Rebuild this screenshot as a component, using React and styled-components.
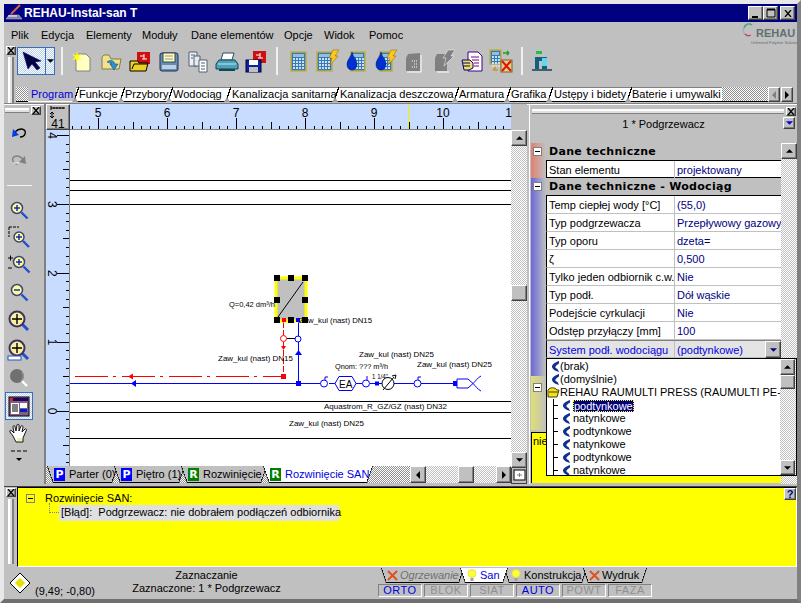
import React from 'react'
import styled, { createGlobalStyle, css } from 'styled-components'

const GlobalStyle = createGlobalStyle`
  html, body { margin: 0; padding: 0; background: #c0c0c0; }
  * { box-sizing: border-box; }
  svg { display: block; flex: none; }
`

const raised = css`
  background-color: #c0c0c0;
  border: 1px solid;
  border-color: #fff #404040 #404040 #fff;
  box-shadow: inset -1px -1px 0 #808080;
`
const sunken = css`
  border: 1px solid;
  border-color: #808080 #fff #fff #808080;
`
const dither = css`
  background-color: #fff;
  background-image: repeating-conic-gradient(#c0c0c0 0 25%, #fff 0 50%);
  background-size: 2px 2px;
`
const slashLine = (dir) =>
  `linear-gradient(${dir}, transparent calc(50% - 0.7px), #000 calc(50% - 0.7px), #000 calc(50% + 0.7px), transparent calc(50% + 0.7px))`

const Window = styled.div`
  width: 801px;
  height: 603px;
  background: #c0c0c0;
  border-style: solid;
  border-width: 4px;
  border-color: #e8e8e8 #808080 #707070 #e8e8e8;
  display: flex;
  flex-direction: column;
  font-family: 'Liberation Sans', Arial, sans-serif;
  font-size: 11px;
  color: #000;
  overflow: hidden;
`

const TitleBar = styled.div`
  height: 18px;
  flex: none;
  background: #000080;
  display: flex;
  align-items: center;
  padding: 0 2px 0 1px;
  color: #fff;
`
const TitleText = styled.div`
  font-weight: bold;
  font-size: 12px;
  margin-left: 1px;
  flex: 1;
`
const CaptionButton = styled.div`
  ${raised}
  width: 15px;
  height: 14px;
  margin-left: ${(p) => p.$gap || 0}px;
  display: flex;
  align-items: center;
  justify-content: center;
`

const MenuRow = styled.div`
  height: 24px;
  flex: none;
  display: flex;
  align-items: center;
  padding: 1px 0 0 7px;
  position: relative;
`
const MenuItem = styled.span`
  width: ${(p) => p.$w}px;
`
const Logo = styled.div`
  position: absolute;
  right: 3px;
  top: 1px;
  width: 52px;
  height: 24px;
`
const LogoWord = styled.div`
  position: absolute;
  left: 14px;
  top: 4px;
  font-size: 11px;
  font-weight: bold;
  color: #5e7070;
`
const LogoSmall = styled.div`
  position: absolute;
  left: 9px;
  top: 17px;
  font-size: 4px;
  white-space: nowrap;
  color: #5e7070;
`

const ToolRow = styled.div`
  height: 41px;
  flex: none;
  display: flex;
  align-items: flex-start;
`
const DockGrip = styled.div`
  width: 12px;
  padding-left: 1px;
  flex: none;
  display: flex;
  flex-direction: column;
  align-items: center;
  gap: 2px;
  align-self: stretch;
`
const CloseBox = styled.div`
  ${raised}
  width: 10px;
  height: 9px;
  display: flex;
  align-items: center;
  justify-content: center;
  flex: none;
`
const GripBars = styled.div`
  flex: 1;
  width: 6px;
  border-left: 2px solid #fff;
  border-right: 2px solid #808080;
  background: #e0e0e0;
`
const PointerButton = styled.div`
  ${dither}
  background-image: repeating-conic-gradient(#b8d0f0 0 25%, #fff 0 50%);
  border: 1px solid #3a6cc0;
  width: 38px;
  height: 28px;
  margin: 1px 0 0 1px;
  display: flex;
  flex: none;
`
const PointerFace = styled.div`
  width: 28px;
  display: flex;
  align-items: center;
  justify-content: center;
  border-right: 1px solid #3a6cc0;
`
const PointerDrop = styled.div`
  flex: 1;
  display: flex;
  align-items: center;
  justify-content: center;
`
const ToolSep = styled.div`
  width: 2px;
  height: 28px;
  margin: 1px ${(p) => p.$r}px 0 ${(p) => p.$l}px;
  background: #f0f0f0;
  flex: none;
`
const IconSlot = styled.div`
  width: 29px;
  height: 29px;
  display: flex;
  align-items: center;
  justify-content: center;
  flex: none;
`

const TabRow = styled.div`
  height: 16px;
  flex: none;
  display: flex;
`
const TabDither = styled.div`
  ${dither}
  flex: ${(p) => (p.$grow ? 1 : 'none')};
  width: ${(p) => p.$w || 0}px;
  background-image: repeating-conic-gradient(#909090 0 25%, #fff 0 50%);
  height: 15px;
  border-bottom: 1px solid #000;
`
const TopTab = styled.div`
  height: 15px;
  width: ${(p) => p.$w}px;
  flex: none;
  padding: 1px 0 0 ${(p) => p.$pad}px;
  line-height: 13px;
  white-space: nowrap;
  overflow: visible;
  background: ${(p) => (p.$active ? '#c0c0c0' : '#fff')};
  color: ${(p) => (p.$active ? '#0000e0' : '#000')};
  border-bottom: 1px solid ${(p) => (p.$active ? '#fff' : '#000')};
  box-shadow: ${(p) => (p.$active ? 'none' : 'inset 0 1px 0 #808080')};
  position: relative;
  &::before {
    content: '';
    position: absolute;
    left: -2px;
    top: 0;
    width: 5px;
    height: 14px;
    background: ${slashLine('to top left')};
    display: ${(p) => (p.$first ? 'none' : 'block')};
  }
  &::after {
    content: '';
    position: absolute;
    left: -4px;
    bottom: -1px;
    border-left: 3px solid transparent;
    border-right: 3px solid transparent;
    border-bottom: 5px solid #a0a0a0;
    display: ${(p) => (p.$first ? 'none' : 'block')};
  }
`
const TabArrows = styled.div`
  width: 25px;
  height: 15px;
  margin-right: 2px;
  flex: none;
  display: flex;
  gap: 1px;
`
const ArrowBox = styled.div`
  ${raised}
  flex: ${(p) => (p.$fixed ? 'none' : 1)};
  width: ${(p) => (p.$fixed ? p.$fixed + 'px' : 'auto')};
  height: ${(p) => (p.$h ? p.$h + 'px' : 'auto')};
  display: flex;
  align-items: center;
  justify-content: center;
`

const Main = styled.div`
  height: 381px;
  flex: none;
  display: flex;
  border-top: 1px solid #808080;
  box-shadow: inset 0 1px 0 #fff;
`
const LeftTools = styled.div`
  width: 42px;
  flex: none;
  display: flex;
  flex-direction: column;
  align-items: flex-start;
  border-right: 2px solid #808080;
  padding: 1px 0 0 1px;
`
const LeftHead = styled.div`
  display: flex;
  width: 36px;
  height: 11px;
  align-items: center;
  gap: 2px;
`
const HBars = styled.div`
  flex: 1;
  height: 5px;
  border-top: 2px solid #fff;
  border-bottom: 1px solid #808080;
  background: #e0e0e0;
`
const LeftIcon = styled.div`
  width: 28px;
  height: ${(p) => p.$h || 28}px;
  margin-top: ${(p) => p.$mt || 0}px;
  display: flex;
  align-items: center;
  justify-content: center;
  flex: none;
  ${(p) =>
    p.$selected &&
    css`
      border: 1px solid #3a6cc0;
      background-color: #fff;
      background-image: repeating-conic-gradient(#b8d0f0 0 25%, #fff 0 50%);
      background-size: 2px 2px;
    `}
`
const LeftSep = styled.div`
  width: 25px;
  height: 1px;
  background: #f4f4f4;
  margin: 11px 0 13px 2px;
  flex: none;
`

const Drawing = styled.div`
  width: 481px;
  flex: none;
  display: flex;
  flex-direction: column;
`
const RulerRow = styled.div`
  height: 26px;
  display: flex;
  flex: none;
`
const RulerCorner = styled.div`
  ${raised}
  width: 24px;
  height: 26px;
  display: flex;
  flex-direction: column;
  align-items: center;
  justify-content: space-between;
  line-height: 12px;
  padding: 1px 0;
  font-size: 12px;
  flex: none;
`
const CanvasRow = styled.div`
  height: 336px;
  display: flex;
  flex: none;
`
const Canvas = styled.div`
  width: 441px;
  background: #fff;
  flex: none;
  display: flex;
`
const VScroll = styled.div`
  ${dither}
  width: 16px;
  flex: none;
  display: flex;
  flex-direction: column;
  height: ${(p) => p.$h || 'auto'};
  position: relative;
`
const ScrollSpacer = styled.div`
  flex: ${(p) => p.$flex || 1};
  height: ${(p) => (p.$h ? p.$h + 'px' : 'auto')};
  width: ${(p) => (p.$w ? p.$w + 'px' : 'auto')};
`
const BottomRow = styled.div`
  height: 18px;
  display: flex;
  flex: none;
`
const SheetTabs = styled.div`
  ${dither}
  background-image: repeating-conic-gradient(#909090 0 25%, #fff 0 50%);
  width: 364px;
  flex: none;
  display: flex;
  padding-left: 1px;
  height: 17px;
`
const SheetTab = styled.div`
  width: ${(p) => p.$w}px;
  margin-right: -4px;
  flex: none;
  height: 17px;
  display: flex;
  align-items: center;
  gap: 4px;
  padding: 0 0 1px 7px;
  white-space: nowrap;
  color: ${(p) => (p.$active ? '#0000e0' : '#000')};
  clip-path: polygon(0 0, 100% 0, calc(100% - 6px) 100%, 6px 100%);
  background:
    ${slashLine('to top right')} left / 6px 100% no-repeat,
    ${slashLine('to top left')} right / 6px 100% no-repeat,
    linear-gradient(#000, #000) bottom / 100% 1px no-repeat,
    ${(p) => (p.$active ? '#fff' : '#c0c0c0')};
  position: relative;
  z-index: ${(p) => (p.$active ? 2 : 1)};
`
const Badge = styled.span`
  width: 11px;
  height: 13px;
  background: ${(p) => (p.$green ? '#008000' : '#0000ff')};
  color: #fff;
  font-weight: bold;
  font-size: 11px;
  line-height: 13px;
  text-align: center;
  font-family: 'DejaVu Sans', sans-serif;
  flex: none;
`
const HScroll = styled.div`
  ${dither}
  width: 101px;
  flex: none;
  height: 17px;
  display: flex;
`
const SizeBox = styled.div`
  width: 16px;
  height: 18px;
  margin-top: 0;
  border: 1px solid #404040;
  background: #c0c0c0;
  display: flex;
  align-items: center;
  justify-content: center;
  flex: none;
`

const Side = styled.div`
  width: 267px;
  flex: none;
  margin-left: 2px;
  padding-left: 1px;
  display: flex;
  flex-direction: column;
  border-left: 1px solid #fff;
  position: relative;
`
const SideHead = styled.div`
  height: 12px;
  flex: none;
  display: flex;
  align-items: center;
  padding: 2px 0 0 1px;
  gap: 2px;
`
const SideTitle = styled.div`
  height: 27px;
  flex: none;
  position: relative;
  text-align: center;
  padding-top: 1px;
  line-height: 15px;
`
const SideMenuButton = styled.div`
  ${raised}
  position: absolute;
  right: 1px;
  top: 1px;
  width: 12px;
  height: 12px;
  display: flex;
  align-items: center;
  justify-content: center;
`
const SideBody = styled.div`
  flex: 1;
  display: flex;
  position: relative;
`
const Props = styled.div`
  width: 250px;
  flex: none;
  display: flex;
  flex-direction: column;
`
const PropGroup = styled.div`
  display: flex;
  flex: none;
  background: ${(p) => `linear-gradient(to right, ${p.$tint}, #c0c0c0 15px)`};
`
const Gutter = styled.div`
  width: 15px;
  flex: none;
  padding: ${(p) => p.$top || 4}px 0 0 2px;
  height: ${(p) => (p.$h ? p.$h + 'px' : 'auto')};
`
const Minus = styled.div`
  width: 9px;
  height: 9px;
  background: #fff;
  border: 1px solid #808080;
  display: flex;
  align-items: center;
  justify-content: center;
  &::after {
    content: '';
    width: 5px;
    height: 1px;
    background: #000;
  }
`
const GroupRows = styled.div`
  flex: 1;
`
const GroupHead = styled.div`
  height: 18px;
  background: #c0c0c0;
  border-bottom: 1px solid #000;
  font-family: 'DejaVu Sans', sans-serif;
  font-weight: bold;
  font-size: 11px;
  letter-spacing: 0.3px;
  line-height: 18px;
  padding-left: 3px;
  white-space: nowrap;
`
const Row = styled.div`
  height: ${(p) => p.$h || 18}px;
  display: grid;
  grid-template-columns: 128px 106px;
  background: ${(p) => (p.$current ? '#e4e4e4' : '#fff')};
  border-left: 1px solid #000;
  border-bottom: 1px solid ${(p) => (p.$last ? '#000' : '#c0c0c0')};
  border-top: ${(p) => (p.$current ? '1px solid #808080' : '0')};
  line-height: 18px;
  color: ${(p) => (p.$current ? '#0000e0' : '#000')};
  position: relative;
`
const Label = styled.div`
  padding-left: 2px;
  border-right: 1px solid #c0c0c0;
  white-space: nowrap;
`
const Value = styled.div`
  padding-left: 2px;
  color: ${(p) => (p.$link ? '#0000e0' : '#000080')};
  white-space: nowrap;
`
const ComboButton = styled.div`
  ${raised}
  position: absolute;
  right: 0;
  top: 0;
  width: 16px;
  height: 17px;
  display: flex;
  align-items: center;
  justify-content: center;
`
const NoteBox = styled.div`
  flex: 1;
  margin: 2px 0 1px;
  background: #ff0;
  border-top: 1px solid #000;
  border-left: 1px solid #000;
  padding-left: 1px;
  line-height: 17px;
  overflow: hidden;
`
const DropList = styled.div`
  position: absolute;
  left: 15px;
  top: 215px;
  width: 251px;
  height: 118px;
  background: #fff;
  border: 1px solid #000;
  display: flex;
  z-index: 5;
`
const DropItems = styled.div`
  flex: 1;
  padding: 1px 0 0 0;
  overflow: hidden;
  position: relative;
`
const DropItem = styled.div`
  height: 13px;
  display: flex;
  align-items: center;
  gap: ${(p) => (p.$child ? 2 : 0)}px;
  padding-left: ${(p) => (p.$child ? 16 : 5)}px;
  white-space: nowrap;
  line-height: 13px;
  position: relative;
  &::before {
    content: '';
    display: ${(p) => (p.$child ? 'block' : 'none')};
    position: absolute;
    left: 6px;
    top: 6px;
    width: 5px;
    height: 1px;
    background: #000;
  }
`
const TreeLine = styled.div`
  position: absolute;
  left: 6px;
  top: 40px;
  bottom: 0;
  width: 1px;
  background: #000;
`
const Selected = styled.span`
  background: #000080;
  color: #fff;
  outline: 1px dotted #ff0;
  outline-offset: -1px;
  padding: 0 1px 0 1px;
  line-height: 12px;
`
const DropScroll = styled(VScroll)`
  width: 16px;
`
const TabFiller = styled.div`
  width: 2px;
  flex: none;
`

const LogPanel = styled.div`
  height: 81px;
  margin-top: 2px;
  flex: none;
  display: flex;
  border-top: 1px solid #404040;
`
const LogGrip = styled(DockGrip)`
  width: 13px;
  padding: 1px 0 3px;
`
const LogBody = styled.div`
  flex: 1;
  background: #ff0;
  border: 1px solid;
  border-color: #000 #fff #fff #000;
  position: relative;
  padding: 3px 0 0 8px;
`
const LogHead = styled.div`
  display: flex;
  align-items: center;
  height: 14px;
  gap: 10px;
`
const LogMinus = styled(Minus)`
  background: #ff0;
`
const LogEntry = styled.div`
  display: inline-block;
  margin: 0 0 0 33px;
  background: #e0e0e0;
  height: 16px;
  width: 280px;
  line-height: 15px;
  padding-left: 2px;
  white-space: pre;
  position: relative;
  &::before {
    content: '';
    position: absolute;
    left: -10px;
    top: -2px;
    width: 9px;
    height: 9px;
    border-left: 1px dotted #808080;
    border-bottom: 1px dotted #808080;
  }
`
const HelpBox = styled.div`
  ${raised}
  position: absolute;
  right: 0;
  top: 0;
  width: 12px;
  height: 12px;
  color: #000080;
  font-weight: bold;
  font-size: 11px;
  line-height: 10px;
  text-align: center;
`

const StatusBar = styled.div`
  flex: 1;
  display: flex;
  padding-top: 1px;
`
const StatusLeft = styled.div`
  width: 374px;
  flex: none;
  display: flex;
  position: relative;
`
const Diamond = styled.div`
  width: 31px;
  padding: 4px 0 0 5px;
  flex: none;
`
const Coords = styled.div`
  width: 64px;
  padding-top: 17px;
  flex: none;
  white-space: nowrap;
`
const StatusText = styled.div`
  width: 215px;
  flex: none;
  text-align: center;
  line-height: 13px;
  padding-top: 1px;
  white-space: nowrap;
`
const StatusRight = styled.div`
  flex: 1;
  display: flex;
  flex-direction: column;
`
const ModeTabs = styled.div`
  display: flex;
  height: 15px;
  padding-left: 3px;
`
const ModeTab = styled.div`
  width: ${(p) => p.$w}px;
  margin-right: -4px;
  flex: none;
  display: flex;
  align-items: center;
  gap: 2px;
  height: 15px;
  padding-left: 6px;
  padding-bottom: 1px;
  white-space: nowrap;
  color: ${(p) => (p.$active ? '#0000e0' : p.$off ? '#707070' : '#000')};
  font-style: ${(p) => (p.$off ? 'italic' : 'normal')};
  clip-path: polygon(0 0, 100% 0, calc(100% - 5px) 100%, 5px 100%);
  background:
    ${slashLine('to top right')} left / 5px 100% no-repeat,
    ${slashLine('to top left')} right / 5px 100% no-repeat,
    linear-gradient(#000, #000) bottom / 100% 1px no-repeat,
    ${(p) => (p.$active ? '#fff' : '#c0c0c0')};
  position: relative;
  z-index: ${(p) => (p.$active ? 2 : 1)};
`
const Modes = styled.div`
  display: flex;
  gap: 2px;
  margin-top: 1px;
`
const Mode = styled.div`
  ${sunken}
  width: 44px;
  height: 13px;
  text-align: center;
  line-height: 11px;
  letter-spacing: 0.5px;
  color: ${(p) => (p.$on ? '#0000e0' : '#909090')};
`

/* --- small drawings --- */
const Svg = ({ s = 24, h, vb, children }) => (
  <svg width={s} height={h || s} viewBox={vb || `0 0 ${s} ${h || s}`}>
    {children}
  </svg>
)

const Tri = ({ dir = 'down', color = '#000', s = 7 }) => {
  const pts = {
    down: '0,0 6,0 3,3',
    up: '0,3 6,3 3,0',
    left: '4,0 4,8 0,4',
    right: '0,0 0,8 4,4',
  }[dir]
  const vb = dir === 'left' || dir === 'right' ? '0 0 4 8' : '0 0 6 3'
  const w = dir === 'left' || dir === 'right' ? 4 : s
  const h = dir === 'left' || dir === 'right' ? 8 : 4
  return (
    <svg width={w} height={h} viewBox={vb}>
      <polygon points={pts} fill={color} />
    </svg>
  )
}

const X = () => (
  <svg width="8" height="7" viewBox="0 0 8 7">
    <path d="M1 0 L7 7 M7 0 L1 7" stroke="#000" strokeWidth="1.3" />
  </svg>
)

const Arrow = () => (
  <Svg s={20}>
    <path d="M1 1 L19 10 L13 11 L18 17 L15 19 L10 13 L6 18 Z" fill="#000040" stroke="#000080" strokeWidth="0.6" />
  </Svg>
)
const Page = ({ fill = '#ffffc0' }) => (
  <path d="M6 5 H16 L20 9 V22 H6 Z" fill={fill} stroke="#808080" />
)
const NewIcon = () => (
  <Svg>
    <Page />
    <path d="M7 2 L8 6 L12 5 L9 8 L12 11 L8 10 L7 14 L6 10 L2 11 L5 8 L2 5 L6 6 Z" fill="#ffff20" />
  </Svg>
)
const OpenIcon = () => (
  <Svg>
    <path d="M3 8 L3 20 H20 L22 10 H12 L10 6 H5 Z" fill="#f0e090" stroke="#808040" />
    <path d="M8 13 C12 10 15 12 16 15 L19 15 L15 21 L11 15 L13 15 C12 14 10 14 8 13 Z" fill="#3090d0" stroke="#004080" strokeWidth="0.5" />
  </Svg>
)
const OpenRedIcon = () => (
  <Svg>
    <rect x="9" y="3" width="13" height="12" fill="#d01010" />
    <path d="M12 7 H16 V5 M14 10 H19 M16 7 V10" stroke="#fff" fill="none" />
    <path d="M2 12 H10 L11 14 H20 L18 22 H2 Z" fill="#f0d020" stroke="#000" />
    <path d="M4 20 L6 15 H20" stroke="#000" fill="none" />
  </Svg>
)
const SaveIcon = () => (
  <Svg>
    <rect x="3" y="4" width="18" height="18" rx="2" fill="#6090b8" stroke="#203050" />
    <rect x="6" y="4" width="12" height="9" fill="#ffffc0" stroke="#404040" />
    <path d="M8 7 H16 M8 10 H16" stroke="#909090" />
    <rect x="5" y="16" width="14" height="4" fill="#c0d0e0" />
  </Svg>
)
const CopyIcon = () => (
  <Svg>
    <path d="M3 3 H11 V17 H3 Z" fill="#f0f0f8" stroke="#506070" />
    <path d="M8 7 H14 V17 H8 Z" fill="#e8e8f0" stroke="#506070" />
    <path d="M13 11 H21 V23 H13 Z" fill="#fff" stroke="#506070" />
    <path d="M15 14 H19 M15 17 H19 M15 20 H19 M5 6 H9 M5 9 H7" stroke="#506070" />
  </Svg>
)
const PrintIcon = () => (
  <Svg>
    <path d="M8 4 H19 L17 11 H6 Z" fill="#fff" stroke="#205060" />
    <path d="M4 11 H20 L23 15 V20 H1 V15 Z" fill="#50a0b8" stroke="#104858" />
    <path d="M3 15 H21" stroke="#c0e8f0" />
    <rect x="4" y="20" width="16" height="2" fill="#104858" />
  </Svg>
)
const SaveRedIcon = () => (
  <Svg>
    <rect x="9" y="2" width="13" height="12" fill="#d01010" />
    <path d="M12 6 H16 V4 M14 9 H19 M16 6 V9" stroke="#fff" fill="none" />
    <rect x="2" y="11" width="15" height="12" fill="#1020a0" stroke="#000040" />
    <rect x="5" y="11" width="9" height="5" fill="#fff" />
    <rect x="5" y="18" width="9" height="5" fill="#c0c0c0" />
  </Svg>
)
const Calc = ({ x = 5, y = 3, w = 15, h = 19 }) => (
  <g>
    <rect x={x} y={y} width={w} height={h} fill="#3878b8" stroke="#c0b040" strokeWidth="1.5" />
    <rect x={x + 2} y={y + 2} width={w - 4} height="3" fill="#90c0e0" />
    {[6, 9, 12, 15].map((dy) =>
      [2, 5, 8, 11].map((dx) =>
        dx + 2 < w ? <rect key={dx + '-' + dy} x={x + dx} y={y + dy} width="2" height="2" fill="#c8e0f0" /> : null
      )
    )}
  </g>
)
const Bolt = ({ x = 0 }) => (
  <path
    transform={`translate(${x} 0)`}
    d="M18 1 H24 L20 7 H23 L15 16 L17 9 H14 Z"
    fill="#ffc820"
    stroke="#806000"
    strokeWidth="0.5"
  />
)
const Drop = ({ x = 0 }) => (
  <path
    transform={`translate(${x} 0)`}
    d="M8 3 C9 8 13 11 13 15 C13 19 10 21 8 21 C5 21 3 19 3 15 C3 11 7 8 8 3 Z"
    fill="#0030d0"
    stroke="#001070"
    strokeWidth="0.5"
  />
)
const CalcIcon = () => <Svg><Calc /></Svg>
const CalcBolt = () => <Svg><Calc x={2} /><Bolt /></Svg>
const DropCalc = () => <Svg><Calc x={7} w={14} /><Drop /></Svg>
const DropBolt = () => <Svg><Calc x={7} w={12} /><Drop /><Bolt /></Svg>
const GrayDoc = () => (
  <Svg>
    <path d="M6 5 L18 4 V22 H4 V9 Z" fill="#808080" />
    <path d="M19 6 V23 H5" stroke="#fff" fill="none" />
    <path d="M12 15 H16 M10 18 H16 M10 12 H16" stroke="#fff" strokeDasharray="1 1" />
  </Svg>
)
const GrayBolt = () => (
  <Svg>
    <path d="M6 5 H16 V22 H4 V9 Z" fill="#808080" />
    <path d="M17 1 H24 L20 7 H23 L13 17 L15 9 H12 Z" fill="#808080" stroke="#fff" strokeWidth="0.5" />
    <path d="M6 23 H18" stroke="#fff" />
  </Svg>
)
const DocHand = () => (
  <Svg>
    <path d="M8 3 H18 L22 7 V22 H8 Z" fill="#fff" stroke="#400080" />
    <path d="M11 8 H19 M12 11 H19 M14 14 H19 M14 17 H19" stroke="#800080" />
    <path d="M2 11 H10 L13 14 V19 L9 21 H4 Z" fill="#f0e060" stroke="#000080" />
    <path d="M3 14 H10 M3 17 H10" stroke="#000080" />
  </Svg>
)
const CalcCross = () => (
  <Svg s={24}>
    <Calc x={1} y={1} w={11} h={14} />
    <path d="M14 4 H20 M20 4 L18 2 M20 4 L18 6" stroke="#20a020" fill="none" strokeWidth="1.5" />
    <rect x="12" y="11" width="11" height="12" fill="#e0d080" stroke="#806020" />
    <path d="M13 12 L22 22 M22 12 L13 22" stroke="#e01010" strokeWidth="2" />
    <path d="M9 21 H4 M4 21 L7 18" stroke="#d09020" strokeWidth="1.5" fill="none" />
  </Svg>
)
const PersonIcon = () => (
  <Svg>
    <rect x="6" y="2" width="6" height="3" fill="#20c040" />
    <path d="M5 8 H17 V20 H12 V12 H9 V20 H5 Z" fill="#106080" />
    <rect x="12" y="9" width="5" height="8" fill="#60d8f0" />
    <path d="M2 21 H22" stroke="#406070" strokeWidth="2" />
  </Svg>
)

const Lens = ({ cx = 10, cy = 9, r = 5.5, mark = 'plus', color = '#ffff90' }) => (
  <g>
    <line x1={cx + r - 1} y1={cy + r - 1} x2={cx + r + 5} y2={cy + r + 5} stroke="#2050d0" strokeWidth="2.4" />
    <circle cx={cx} cy={cy} r={r} fill={color} stroke="#404080" strokeWidth="1.5" />
    <path d={`M${cx - 3} ${cy} H${cx + 3}`} stroke="#0020c0" strokeWidth="1.4" />
    {mark === 'plus' && <path d={`M${cx} ${cy - 3} V${cy + 3}`} stroke="#0020c0" strokeWidth="1.4" />}
  </g>
)
const Undo = () => (
  <Svg s={18}>
    <path d="M5 7 C10 2 17 4 15 9 C14 12 11 12 10 12" stroke="#000" fill="none" strokeWidth="1.4" />
    <path d="M2 12 L3 4 L9 10 Z" fill="#0040e0" />
  </Svg>
)
const Redo = () => (
  <Svg s={18}>
    <path d="M13 7 C8 2 1 4 3 9 C4 12 7 12 8 12" stroke="#808080" fill="none" strokeWidth="1.4" />
    <path d="M16 12 L15 4 L9 10 Z" fill="#808080" />
    <path d="M3 11 H9" stroke="#fff" />
  </Svg>
)
const BigLens = ({ under }) => (
  <Svg>
    <line x1="15" y1="15" x2="21" y2="21" stroke="#2050d0" strokeWidth="3" />
    <circle cx="10" cy="10" r="7.5" fill="#f8f0a0" stroke="#403060" strokeWidth="2" />
    <path d="M5 10 H15 M10 5 V15" stroke="#000" strokeWidth="1.4" />
    {under && <rect x="1" y="18" width="13" height="4" fill="#fff" stroke="#2050d0" />}
  </Svg>
)
const GrayLens = () => (
  <Svg>
    <line x1="15" y1="15" x2="20" y2="20" stroke="#fff" strokeWidth="2.4" />
    <circle cx="10" cy="10" r="7" fill="#707070" />
    <path d="M15 6 A7 7 0 0 1 14 15" stroke="#a0a0a0" fill="none" />
  </Svg>
)
const PanelIcon = () => (
  <Svg>
    <rect x="2" y="3" width="20" height="19" fill="#806080" stroke="#000" />
    <rect x="3" y="4" width="18" height="3" fill="#200060" />
    <rect x="3" y="4" width="3" height="3" fill="#e02020" />
    <rect x="4" y="9" width="8" height="11" fill="#fff" />
    <rect x="13" y="9" width="7" height="5" fill="#fff" />
    <rect x="13" y="15" width="7" height="3" fill="#0020d0" />
    <path d="M5 11 H11 M5 13 H11 M5 15 H11 M5 17 H11" stroke="#000" />
  </Svg>
)
const Hand = () => (
  <Svg>
    <path
      d="M6 14 L3 10 C2 8 4 8 5 9 L7 11 L6 5 C6 3 8 3 8 5 L9 9 L10 3 C10 2 12 2 12 3 L12 9 L14 4 C15 3 16 4 16 5 L15 10 L18 7 C19 6 20 8 19 9 L16 16 V20 H9 Z"
      fill="#fff"
      stroke="#000"
      strokeWidth="0.9"
    />
    <path d="M10 16 V19 H15 V16" fill="#f0f0a0" />
  </Svg>
)
const Moon = () => (
  <svg width="8" height="11" viewBox="0 0 8 11">
    <path d="M7 0 C3 1.5 0 3.5 0 5.5 C0 8 3 10 7 11 L5.5 8 C4 7.5 3 6.5 3.5 5.5 C4 4.5 5.5 3.5 7 2.5 Z" fill="#103090" />
  </svg>
)
const FolderOpen = () => (
  <svg width="13" height="11" viewBox="0 0 13 11">
    <path d="M1 10 V3 C3 0 8 0 10 3 H12 L10 10 Z" fill="#f8e020" stroke="#404000" />
    <path d="M2 5 H11" stroke="#404000" />
  </svg>
)
const FolderSlot = styled.span`
  margin-left: -5px;
  flex: none;
`
const RedX = () => (
  <svg width="11" height="11" viewBox="0 0 12 12">
    <path d="M1 1 L11 11 M11 1 L1 11" stroke="#e05020" strokeWidth="2.2" />
  </svg>
)
const Bulb = () => (
  <svg width="12" height="14" viewBox="0 0 12 14">
    <circle cx="6" cy="5.5" r="4" fill="#ffff30" stroke="#e0e060" />
    <rect x="4.5" y="10" width="3" height="3" fill="#a0a0a0" />
  </svg>
)
const ZoomArrows = () => (
  <svg width="18" height="12" viewBox="0 0 18 12">
    <path d="M2 2 H16 M2 0 V4 M5 1 V3 M8 1 V3 M11 1 V3 M14 1 V3 M3 6 V12 M1 8 L3 6 L5 8 M1 10 L3 12 L5 10" stroke="#000" fill="none" />
  </svg>
)

const HRuler = () => {
  const unit = 69
  const ticks = []
  for (let i = -8; i <= 56; i++) {
    const x = Math.round(28 + (i * unit) / 8) + 0.5
    if (x < 0 || x > 441) continue
    const len = i % 8 === 0 ? 11 : i % 4 === 0 ? 7 : 3
    ticks.push(<line key={i} x1={x} x2={x} y1={25 - len} y2={25} stroke="#000" />)
  }
  const labels = [5, 6, 7, 8, 9, 10, 11]
  return (
    <svg width="457" height="26" viewBox="0 0 457 26">
      <rect width="441" height="26" fill="#c8dcff" />
      <rect x="441" width="16" height="26" fill="#c0c0c0" />
      <line x1="0" x2="441" y1="25.5" y2="25.5" stroke="#808080" />
      <g>{ticks}</g>
      <line x1="338.5" x2="338.5" y1="0" y2="25" stroke="#f0f000" />
      {labels.map((n, i) => (
        <text
          key={n}
          x={28 + i * unit}
          y={13}
          fontSize="12"
          fontFamily="Liberation Sans"
          textAnchor={n === 11 ? 'end' : 'middle'}
        >
          {n === 11 ? '1' : n}
        </text>
      ))}
    </svg>
  )
}

const VRuler = () => {
  const unit = 68.9
  const ticks = []
  for (let i = 0; i <= 40; i++) {
    const y = Math.round(5 + (i * unit) / 8) + 0.5
    if (y > 336) continue
    const len = i % 8 === 0 ? 12 : i % 4 === 0 ? 6 : 3
    ticks.push(<line key={i} x1={23 - len} x2={23} y1={y} y2={y} stroke="#000" />)
  }
  return (
    <svg width="24" height="336" viewBox="0 0 24 336">
      <rect width="24" height="336" fill="#c8dcff" />
      <line x1="23.5" x2="23.5" y1="0" y2="336" stroke="#808080" />
      <g>{ticks}</g>
      {[4, 3, 2, 1, 0].map((n, i) => (
        <text
          key={n}
          x="0"
          y="0"
          fontSize="12"
          fontFamily="Liberation Sans"
          textAnchor="middle"
          transform={`translate(2 ${5.5 + i * unit}) rotate(90)`}
        >
          {n}
        </text>
      ))}
    </svg>
  )
}

const labelProps = { fontSize: 8, fontFamily: 'Liberation Sans', fill: '#000', lengthAdjust: 'spacingAndGlyphs' }

const Diagram = () => (
  <svg width="441" height="336" viewBox="70 130 441 336">
    <g stroke="#000" shapeRendering="crispEdges">
      {[180.5, 190.5, 204.5, 401.5, 412.5, 438.5].map((y) => (
        <line key={y} x1="70" x2="511" y1={y} y2={y} />
      ))}
    </g>

    {/* red return */}
    <path d="M75 376.5 H284" stroke="#ff0000" strokeDasharray="33 5 3 6" fill="none" />
    <path d="M283.5 322 V335 M283.5 342 V377" stroke="#ff0000" strokeDasharray="6 2" fill="none" />
    <polygon points="128,376.5 133,373.5 133,379.5" fill="#ff0000" />
    <rect x="281" y="374" width="5" height="5" fill="#ff0000" />
    <polygon points="281,346 286,346 283.5,350" fill="#ff0000" />
    <circle cx="283.5" cy="338.5" r="3" fill="#fff" stroke="#ff0000" />

    {/* blue supply */}
    <path d="M70 383.5 H324 M298.5 320 V383 M329 383.5 H362 M370 383.5 H384 M392 383.5 H414 M421 383.5 H453" stroke="#0000ff" fill="none" />
    <polygon points="131,383.5 136,380 136,387" fill="#0000ff" />
    <polygon points="298.5,350 295,355 302,355" fill="#0000ff" />
    <rect x="296" y="381" width="5" height="5" fill="#0000ff" />
    <path d="M287 338.5 H295" stroke="#000" />
    <circle cx="298" cy="339" r="3" fill="#fff" stroke="#0000ff" />

    <circle cx="324" cy="383.5" r="3.5" fill="#fff" stroke="#0000ff" />
    <path d="M325 380 V377 H328" stroke="#0000ff" fill="none" />
    <path d="M339 376.5 H352 L356 383.5 L352 390.5 H339 L335 383.5 Z" fill="#fff" stroke="#0000ff" />
    <text x="339" y="388" fontSize="10" fontFamily="Liberation Sans">EA</text>
    <circle cx="366" cy="383.5" r="3.5" fill="#fff" stroke="#0000ff" />
    <path d="M367 380 V376" stroke="#0000ff" fill="none" />
    <rect x="375" y="381.5" width="4" height="4" fill="#0000ff" />
    <circle cx="388" cy="383.5" r="6" fill="#fff" stroke="#000" />
    <path d="M383 390 L394 377 M392 376 L396 375 L395 379" stroke="#000" fill="none" />
    <circle cx="417.5" cy="383.5" r="3.5" fill="#fff" stroke="#0000ff" />
    <path d="M418 380 V377 H421" stroke="#0000ff" fill="none" />
    <rect x="453" y="381" width="4" height="5" fill="#0000ff" />
    <path d="M457 379 H468 L473 383.5 L468 388 H457 Z" fill="#fff" stroke="#0000ff" />
    <path d="M481 376 C477 378 476 381 473 383.5 C476 386 477 389 481 391" fill="none" stroke="#0000ff" />

    {/* heater */}
    <rect x="276" y="278" width="30" height="43" fill="#c0c0c0" stroke="#ffff00" strokeWidth="3" />
    <line x1="278" y1="317" x2="303" y2="282" stroke="#000" />
    {[
      [277, 278],
      [291, 278],
      [305, 278],
      [277, 300],
      [305, 300],
      [277, 320],
      [291, 320],
      [305, 320],
    ].map(([x, y]) => (
      <rect key={x + '-' + y} x={x - 3} y={y - 3} width="6" height="6" fill="#000" />
    ))}
    <rect x="282" y="318" width="4" height="4" fill="#ff0000" />
    <rect x="296" y="318" width="4" height="4" fill="#0000ff" />

    <text x="229" y="307" textLength="46" {...labelProps}>Q=0,42 dm³/h</text>
    <text x="299" y="323" textLength="73" {...labelProps}>Zaw_kul (nast) DN15</text>
    <text x="218" y="361" textLength="75" {...labelProps}>Zaw_kul (nast) DN15</text>
    <text x="359" y="357" textLength="75" {...labelProps}>Zaw_kul (nast) DN25</text>
    <text x="335" y="369" textLength="53" {...labelProps}>Qnom: ??? m³/h</text>
    <text x="372" y="379" textLength="16" {...labelProps}>1 1/4"</text>
    <text x="417" y="367" textLength="75" {...labelProps}>Zaw_kul (nast) DN25</text>
    <text x="324" y="409" textLength="123" {...labelProps}>Aquastrom_R_GZ/GZ (nast) DN32</text>
    <text x="289" y="426" textLength="75" {...labelProps}>Zaw_kul (nast) DN25</text>
  </svg>
)

const menus = [
  ['Plik', 30],
  ['Edycja', 45],
  ['Elementy', 56],
  ['Moduły', 49],
  ['Dane elementów', 93],
  ['Opcje', 40],
  ['Widok', 45],
  ['Pomoc', 50],
]
const topTabs = [
  ['Program', 48, 3],
  ['Funkcje', 46, 3],
  ['Przybory', 48, 3],
  ['Wodociąg', 58, 3],
  ['Kanalizacja sanitarna', 108, 4],
  ['Kanalizacja deszczowa', 120, 4],
  ['Armatura', 52, 3],
  ['Grafika', 42, 3],
  ['Ustępy i bidety', 79, 4],
  ['Baterie i umywalki', 93, 3],
]
const listItems = ['podtynkowe', 'natynkowe', 'podtynkowe', 'natynkowe', 'podtynkowe', 'natynkowe']
const waterRows = [
  ['Temp ciepłej wody [°C]', '(55,0)'],
  ['Typ podgrzewacza', 'Przepływowy gazowy'],
  ['Typ oporu', 'dzeta='],
  ['ζ', '0,500'],
  ['Tylko jeden odbiornik c.w.', 'Nie'],
  ['Typ podł.', 'Dół wąskie'],
  ['Podejście cyrkulacji', 'Nie'],
  ['Odstęp przyłączy [mm]', '100'],
]

export default function App() {
  return (
    <>
      <GlobalStyle />
      <Window>
        <TitleBar>
          <Svg s={18}>
            <path d="M1 15 H17 L14 11 H4 Z" fill="#8080a0" stroke="#c0c0c0" strokeWidth="0.5" />
            <path d="M6 10 L15 1" stroke="#e06040" strokeWidth="2" />
            <path d="M3 12 H12" stroke="#fff" />
          </Svg>
          <TitleText>REHAU-Instal-san T</TitleText>
          <CaptionButton>
            <svg width="9" height="9"><rect x="1" y="7" width="6" height="2" fill="#000" /></svg>
          </CaptionButton>
          <CaptionButton>
            <svg width="10" height="10"><path d="M1 1.5 H9 V9 H1 Z" fill="none" stroke="#000" /><path d="M1 1.5 H9" stroke="#000" strokeWidth="2" /></svg>
          </CaptionButton>
          <CaptionButton $gap={2}>
            <X />
          </CaptionButton>
        </TitleBar>

        <MenuRow>
          {menus.map(([m, w]) => (
            <MenuItem key={m} $w={w}>{m}</MenuItem>
          ))}
          <Logo>
            <svg width="14" height="16" viewBox="0 0 14 16">
              <path d="M10 2 A5 5 0 0 0 2 5" fill="none" stroke="#40a080" strokeWidth="1.4" />
              <path d="M2 5 A5 5 0 0 0 3 11" fill="none" stroke="#a0b0b0" strokeWidth="1.4" />
              <path d="M3 11 A5 5 0 0 0 9 12" fill="none" stroke="#d04060" strokeWidth="1.4" />
            </svg>
            <LogoWord>REHAU</LogoWord>
            <LogoSmall>Unlimited Polymer Solutions</LogoSmall>
          </Logo>
        </MenuRow>

        <ToolRow>
          <DockGrip>
            <CloseBox><X /></CloseBox>
            <GripBars />
          </DockGrip>
          <PointerButton>
            <PointerFace><Arrow /></PointerFace>
            <PointerDrop><Tri /></PointerDrop>
          </PointerButton>
          <ToolSep $l={6} $r={4} />
          <IconSlot><NewIcon /></IconSlot>
          <IconSlot><OpenIcon /></IconSlot>
          <IconSlot><OpenRedIcon /></IconSlot>
          <IconSlot><SaveIcon /></IconSlot>
          <IconSlot><CopyIcon /></IconSlot>
          <IconSlot><PrintIcon /></IconSlot>
          <IconSlot><SaveRedIcon /></IconSlot>
          <ToolSep $l={6} $r={5} />
          <IconSlot><CalcIcon /></IconSlot>
          <IconSlot><CalcBolt /></IconSlot>
          <IconSlot><DropCalc /></IconSlot>
          <IconSlot><DropBolt /></IconSlot>
          <IconSlot><GrayDoc /></IconSlot>
          <IconSlot><GrayBolt /></IconSlot>
          <IconSlot><DocHand /></IconSlot>
          <IconSlot><CalcCross /></IconSlot>
          <ToolSep $l={6} $r={4} />
          <IconSlot><PersonIcon /></IconSlot>
        </ToolRow>

        <TabRow>
          <DockGrip><GripBars /></DockGrip>
          <TabDither $w={12} />
          {topTabs.map(([t, w, pad], i) => (
            <TopTab key={t} $w={w} $active={i === 0} $first={i === 0} $pad={pad}>{t}</TopTab>
          ))}
          <TabDither $grow />
          <TabArrows>
            <ArrowBox><Tri dir="left" color="#808080" /></ArrowBox>
            <ArrowBox><Tri dir="right" /></ArrowBox>
          </TabArrows>
          <TabFiller />
        </TabRow>

        <Main>
          <LeftTools>
            <LeftHead>
              <HBars />
              <CloseBox><X /></CloseBox>
            </LeftHead>
            <LeftIcon $mt={4}><Undo /></LeftIcon>
            <LeftIcon $h={26}><Redo /></LeftIcon>
            <LeftSep />
            <LeftIcon $h={24}><Svg><Lens /></Svg></LeftIcon>
            <LeftIcon><Svg><path d="M2 2 H12 M2 2 V12" stroke="#000" strokeDasharray="3 1" /><Lens cx={12} cy={12} r={5} /></Svg></LeftIcon>
            <LeftIcon><Svg><path d="M1 5 H6 M3.5 2.5 V7.5 M1 15 H5" stroke="#000" /><Lens cx={12} cy={9} /></Svg></LeftIcon>
            <LeftIcon><Svg><Lens mark="minus" /></Svg></LeftIcon>
            <LeftIcon><BigLens /></LeftIcon>
            <LeftIcon $h={29}><BigLens under /></LeftIcon>
            <LeftIcon $h={28}><GrayLens /></LeftIcon>
            <LeftIcon $selected><PanelIcon /></LeftIcon>
            <LeftIcon><Hand /></LeftIcon>
            <LeftIcon $h={16}>
              <svg width="18" height="16" viewBox="0 0 18 16">
                <path d="M1 3 H5 M7 3 H11 M13 3 H17" stroke="#000" />
                <polygon points="6,10 12,10 9,13" fill="#000" />
              </svg>
            </LeftIcon>
          </LeftTools>

          <Drawing>
            <RulerRow>
              <RulerCorner>
                <ZoomArrows />
                <span>41</span>
              </RulerCorner>
              <HRuler />
            </RulerRow>
            <CanvasRow>
              <VRuler />
              <Canvas><Diagram /></Canvas>
              <VScroll $h="338px">
                <ArrowBox $fixed={16} $h={16}><Tri dir="up" /></ArrowBox>
                <ScrollSpacer $h={139} $flex="none" />
                <ArrowBox $fixed={16} $h={16} />
                <ScrollSpacer />
                <ArrowBox $fixed={16} $h={16}><Tri /></ArrowBox>
              </VScroll>
            </CanvasRow>
            <BottomRow>
              <SheetTabs>
                <SheetTab $w={71}><Badge>P</Badge>Parter (0)</SheetTab>
                <SheetTab $w={71}><Badge>P</Badge>Piętro (1)</SheetTab>
                <SheetTab $w={86}><Badge $green>R</Badge>Rozwinięcie</SheetTab>
                <SheetTab $w={110} $active><Badge $green>R</Badge>Rozwinięcie SAN</SheetTab>
              </SheetTabs>
              <HScroll>
                <ArrowBox $fixed={16}><Tri dir="left" /></ArrowBox>
                <ScrollSpacer $h={17} $flex="none" $w={32} />
                <ArrowBox $fixed={16} />
                <ScrollSpacer />
                <ArrowBox $fixed={15}><Tri dir="right" /></ArrowBox>
              </HScroll>
              <SizeBox>
                <svg width="13" height="12"><rect x="1" y="1" width="11" height="10" fill="#fff" stroke="#000" /><path d="M4 6 H9 M6.5 4 V8" stroke="#808080" /></svg>
              </SizeBox>
            </BottomRow>
          </Drawing>

          <Side>
            <SideHead>
              <HBars />
              <CloseBox><X /></CloseBox>
            </SideHead>
            <SideTitle>
              1 * Podgrzewacz
              <SideMenuButton><Tri color="#0000e0" /></SideMenuButton>
            </SideTitle>
            <SideBody>
              <Props>
                <PropGroup $tint="#e08070">
                  <Gutter><Minus /></Gutter>
                  <GroupRows>
                    <GroupHead>Dane techniczne</GroupHead>
                    <Row $h={17} $last>
                      <Label>Stan elementu</Label>
                      <Value>projektowany</Value>
                    </Row>
                  </GroupRows>
                </PropGroup>
                <PropGroup $tint="#6868d8">
                  <Gutter><Minus /></Gutter>
                  <GroupRows>
                    <GroupHead>Dane techniczne - Wodociąg</GroupHead>
                    {waterRows.map(([a, b]) => (
                      <Row key={a}>
                        <Label>{a}</Label>
                        <Value>{b}</Value>
                      </Row>
                    ))}
                    <Row $current>
                      <Label>System podł. wodociągu</Label>
                      <Value $link>(podtynkowe)</Value>
                      <ComboButton><Tri color="#000080" /></ComboButton>
                    </Row>
                    <Row />
                  </GroupRows>
                </PropGroup>
                <PropGroup $tint="#e0e070">
                  <Gutter $h={54} $top={7}><Minus /></Gutter>
                  <GroupRows />
                </PropGroup>
                <NoteBox>nie</NoteBox>
              </Props>
              <VScroll>
                <ArrowBox $fixed={16} $h={16}><Tri dir="up" /></ArrowBox>
                <ScrollSpacer />
              </VScroll>
              <DropList>
                <DropItems>
                  <TreeLine />
                  <DropItem><Moon />(brak)</DropItem>
                  <DropItem><Moon />(domyślnie)</DropItem>
                  <DropItem><FolderSlot><FolderOpen /></FolderSlot>REHAU RAUMULTI PRESS (RAUMULTI PE-RT)</DropItem>
                  {listItems.map((t, i) => (
                    <DropItem key={i} $child>
                      <Moon />
                      {i === 0 ? <Selected>{t}</Selected> : t}
                    </DropItem>
                  ))}
                </DropItems>
                <DropScroll>
                  <ArrowBox $fixed={15} $h={16}><Tri dir="up" /></ArrowBox>
                  <ArrowBox $fixed={15} $h={14} />
                  <ScrollSpacer />
                  <ArrowBox $fixed={15} $h={15}><Tri /></ArrowBox>
                </DropScroll>
              </DropList>
            </SideBody>
          </Side>
        </Main>

        <LogPanel>
          <LogGrip>
            <CloseBox><X /></CloseBox>
            <GripBars />
          </LogGrip>
          <LogBody>
            <LogHead>
              <LogMinus />
              <span>Rozwinięcie SAN:</span>
            </LogHead>
            <LogEntry>{'[Błąd]:  Podgrzewacz: nie dobrałem podłączeń odbiornika'}</LogEntry>
            <HelpBox>?</HelpBox>
          </LogBody>
        </LogPanel>

        <StatusBar>
          <StatusLeft>
            <Diamond>
              <svg width="22" height="22" viewBox="0 0 22 22">
                <polygon points="11,1 21,11 11,21 1,11" fill="#fff" stroke="#000" />
                <polygon points="11,6 16,11 11,16 6,11" fill="#e8e000" />
              </svg>
            </Diamond>
            <Coords>(9,49; -0,80)</Coords>
            <StatusText>
              Zaznaczanie
              <br />
              Zaznaczone: 1 * Podgrzewacz
            </StatusText>
          </StatusLeft>
          <StatusRight>
            <ModeTabs>
              <ModeTab $w={83} $off><RedX />Ogrzewanie</ModeTab>
              <ModeTab $w={48} $active><Bulb />San</ModeTab>
              <ModeTab $w={83}><Bulb />Konstrukcja</ModeTab>
              <ModeTab $w={64}><RedX />Wydruk</ModeTab>
            </ModeTabs>
            <Modes>
              <Mode $on>ORTO</Mode>
              <Mode>BLOK</Mode>
              <Mode>SIAT</Mode>
              <Mode $on>AUTO</Mode>
              <Mode>POWT</Mode>
              <Mode>FAZA</Mode>
            </Modes>
          </StatusRight>
        </StatusBar>
      </Window>
    </>
  )
}
